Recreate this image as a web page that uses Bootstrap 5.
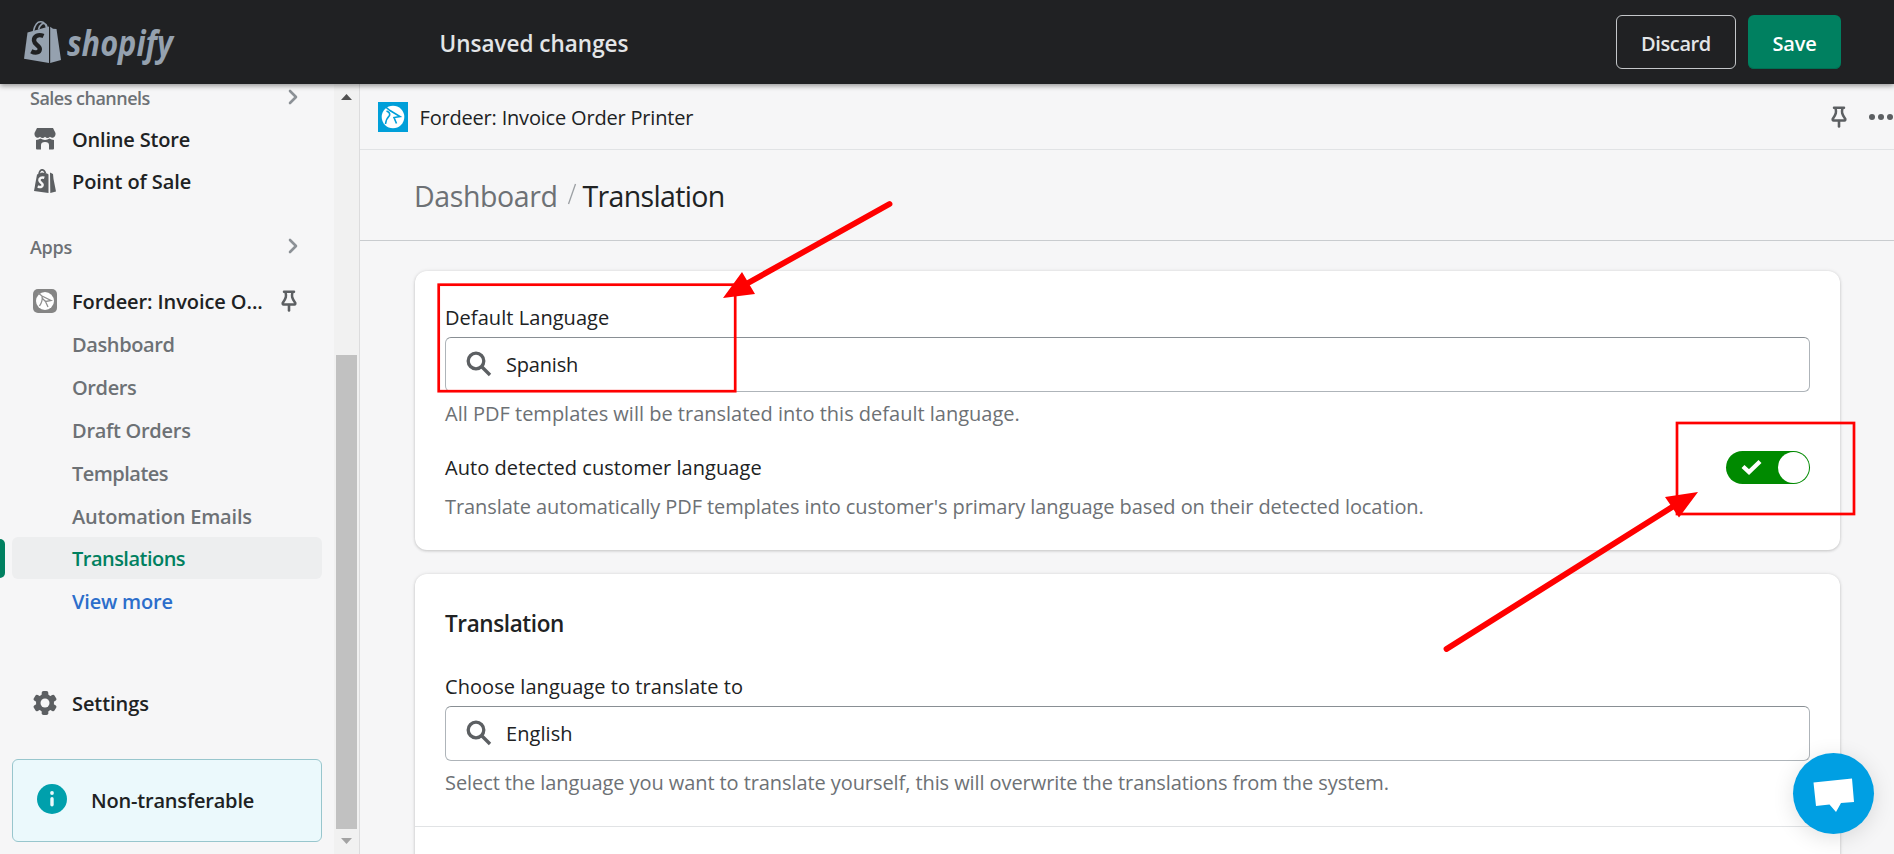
<!DOCTYPE html>
<html lang="en">
<head>
<meta charset="utf-8">
<title>Fordeer: Invoice Order Printer</title>
<link rel="stylesheet" href="https://cdn.jsdelivr.net/npm/bootstrap@5.3.0/dist/css/bootstrap.min.css">
<style>
  html, body { height: 100%; overflow: hidden; }
  body { font-family: "Open Sans", "Noto Sans", sans-serif; font-size: 20px; line-height: 30px; color: #202223; background: #f6f6f7; }
  .t { white-space: nowrap; }
  .drop { padding-top: 2px; }
  .track-6 { letter-spacing: -.66px; }
  .track-5 { letter-spacing: -.52px; }
  .track-4 { letter-spacing: -.39px; }
  .track-3 { letter-spacing: -.28px; }
  .track-2 { letter-spacing: -.19px; }
  .track-1 { letter-spacing: -.08px; }
  .track-wide { letter-spacing: .06px; }

  .topbar { height: 84px; background: #202123; z-index: 3; box-shadow: 0 2px 5px rgba(0,0,0,.38); padding-left: 24px; padding-right: 53px; }
  .brand-slot { width: 415.500px; }
  .brand-slot svg { overflow: visible; }
  .status-text { font-size: 22.5px; font-weight: 600; color: #e3e5e7; padding-top: 4px; }
  .btn-bar { height: 54px; border-radius: 6px; font-size: 20px; font-weight: 600; padding: 3px 0 0; line-height: 30px; }
  .btn-discard { width: 120px; color: #e3e5e7; border: 1px solid #c4c7ca; margin-right: 12px; }
  .btn-save { width: 93px; color: #fff; background: #008060; border: 0; box-shadow: inset 0 -1px 0 #006e52; }

  .sidebar { width: 334px; background: #f6f6f7; }
  .group-head { height: 42px; padding: 0 36px 0 30px; color: #6d7175; font-size: 18px; font-weight: 600; }
  .group-sales { margin-top: -8px; }
  .group-apps { margin-top: 23px; }
  .side-row { height: 42px; padding-left: 33px; font-weight: 600; color: #202223; }
  .side-row svg { flex: none; }
  .side-row svg:first-child { margin-right: 15px; }
  .app-row { margin-top: 13px; padding-right: 37px; }
  .settings-row { margin-top: 60px; }
  .sub-row { height: 43px; padding-left: 72px; font-weight: 600; color: #6d7175; }
  .sub-row.current { height: 42px; margin: 0 12px 1px; padding-left: 60px; border-radius: 6px; background: #edeeef; color: #008060; }
  .sub-row.current::before { content: ""; position: absolute; left: -12px; top: 2px; width: 5px; height: 39px; border-radius: 0 5px 5px 0; background: #008060; }
  .sub-row.more { height: 42px; color: #2c6ecb; }
  .notice { height: 83px; margin: 35px 12px 0; padding-left: 24px; border: 1px solid #98c6cd; border-radius: 6px; background: #ebf9fc; font-weight: 600; }
  .notice svg { margin: -3px 24px 0 0; }

  .scroll-track { width: 25px; background: #f1f1f1; padding-top: 10px; }
  .scroll-thumb { width: 21px; height: 474px; background: #c1c1c1; margin: 255px 0 9px; }

  .content-pane { border-left: 1px solid #dcdcdd; }
  .app-head { height: 66px; border-bottom: 1px solid #e1e3e5; padding-left: 18px; }
  .app-name { margin-left: 11.500px; }
  .app-head .pin { margin-right: 22px; }
  .crumbs { height: 91px; border-bottom: 1px solid #c9cccf; padding-left: 54px; font-size: 28.5px; line-height: 40px; }
  .crumbs svg { margin: -2px 6px 0 9px; }
  .muted-text { color: #6d7175; }

  .panel { width: 1425px; margin-left: 55px; border-radius: 12px; background: #fff; box-shadow: 0 0 4px rgba(23,24,24,.08), 0 1px 3px rgba(0,0,0,.17); padding: 0 30px; }
  .panel-default { margin-top: 30px; height: 279px; padding-top: 32px; }
  .panel-translate { margin-top: 24px; height: 340px; padding-top: 35px; }
  .panel-title { font-size: 22.5px; font-weight: 600; margin-bottom: 33px; }
  .field { height: 54.500px; margin-top: 4px; border: 1px solid #aeb4b9; border-top-color: #898f94; border-radius: 6px; padding-left: 20px; background: #fff; }
  .field svg { margin-right: 14px; }
  .help { margin-top: 7.500px; }
  .auto-row { margin-top: 21px; height: 34px; }
  .auto-help { margin-top: 8px; }
  .rule { margin: 28px -30px 0; border-top: 1px solid #e1e3e5; }
  .toggle { width: 84px; height: 33px; border-radius: 17px; background: #008a00; padding-right: 1px; }
  .toggle svg { margin: -1px 0 0 15px; }
  .knob { width: 31px; height: 31px; border-radius: 50%; background: #fff; }
  .chat { left: 1793px; top: 753px; width: 81px; height: 81px; border-radius: 50%; background: #009fe3; box-shadow: 0 4px 22px rgba(0,0,0,.12); z-index: 4; }
  .marks { z-index: 6; pointer-events: none; }
</style>
</head>
<body class="d-flex flex-column">

<header class="topbar d-flex align-items-center position-relative flex-shrink-0">
  <div class="brand-slot flex-shrink-0">
    <svg width="156" height="48" viewBox="24 18 156 48" fill="#95a1af" class="d-block">
      <path d="M27.500 32.500 49 26.500V63L24 58.700z"/><path d="M50.200 26.800 53 28.700 56.500 29 61 60 50.200 63z"/>
      <path d="M33.500 31C35 24.500 38 21.500 41 21.800S46 25 46.500 28M38.500 29.500C40 24 43.500 22 46 24.500L47.200 27" fill="none" stroke="#95a1af" stroke-width="1.500"/>
      <path d="M43.500 36C38.500 33.800 33.800 36 34 40.500 34.300 45 40.200 45.500 39.800 49.300 39.400 53 35 53.300 31.300 51.300" fill="none" stroke="#202123" stroke-width="4.400"/>
      <text x="67" y="55.500" font-family="Open Sans" font-size="36" font-weight="700" font-style="italic" textLength="106" lengthAdjust="spacingAndGlyphs">shopify</text>
    </svg>
  </div>
  <div class="status-text t me-auto">Unsaved changes</div>
  <button class="btn btn-bar btn-discard track-4">Discard</button>
  <button class="btn btn-bar btn-save track-2">Save</button>
</header>

<div class="d-flex flex-grow-1 overflow-hidden">
  <nav class="sidebar flex-shrink-0">
    <div class="group-head group-sales d-flex align-items-center justify-content-between"><span class="t drop track-5">Sales channels</span>
      <svg width="10" height="16" viewBox="0 0 10 16" fill="none" stroke="#8c9196" stroke-width="2.600" stroke-linecap="round" stroke-linejoin="round"><path d="M2 2 8 8 2 14"/></svg></div>
    <div class="side-row d-flex align-items-center t">
      <svg width="24" height="24" viewBox="0 0 24 24" fill="#5c5f62"><path d="M4 1h16l2.500 5v1.500a3.200 3.200 0 0 1-5.500 2.200 3.500 3.500 0 0 1-5 0 3.500 3.500 0 0 1-5 0A3.200 3.200 0 0 1 1.500 7.500V6z"/><path d="M3 13q2.500 0 4.500-1.400 2 1.400 4.500 1.400t4.500-1.400Q18.500 13 21 13v8.500q0 1-1 1h-4V18q0-3-4-3t-4 3v4.500H4q-1 0-1-1z"/></svg>
      <span class="drop track-2">Online Store</span></div>
    <div class="side-row d-flex align-items-center t">
      <svg width="24" height="24" viewBox="0 0 24 24" fill="#5c5f62"><path d="M4 5.500 9 3.500 14 4.500 15.500 5.500V24L1 22z"/><path d="M17 3.500 20 5 20.500 10 23 22.500 17.300 24z"/><path d="M6 5C7-.5 11-.5 12.500 4.500" fill="none" stroke="#5c5f62" stroke-width="1.700"/><path d="M11.300 8.800C8.500 7.800 6.300 9 6.400 11.300S9.900 13.800 9.700 16 7 18.600 4.800 17.300" fill="none" stroke="#f6f6f7" stroke-width="2.500"/></svg>
      <span class="drop track-1">Point of Sale</span></div>
    <div class="group-head group-apps d-flex align-items-center justify-content-between"><span class="t drop track-3">Apps</span>
      <svg width="10" height="16" viewBox="0 0 10 16" fill="none" stroke="#8c9196" stroke-width="2.600" stroke-linecap="round" stroke-linejoin="round"><path d="M2 2 8 8 2 14"/></svg></div>
    <div class="side-row app-row d-flex align-items-center t">
      <svg width="24" height="24" viewBox="0 0 24 24"><rect width="24" height="24" rx="5" fill="#858585"/><circle cx="12" cy="12" r="9" fill="#fff"/><path d="M4.500 3.500 9 7 18 11.500 12.500 12.500 15 18M9 7Q10 12 6.500 17M9 9 12.500 12.500" fill="none" stroke="#8f8f8f" stroke-width="1.300"/></svg>
      <span class="me-auto drop track-1">Fordeer: Invoice O...</span>
      <svg width="16" height="22" viewBox="0 0 16 22" fill="none" stroke="#5c5f62"><path d="M3 1.700H13M4.500 2C5.500 6 5.300 8 1.700 13Q1.500 14.500 2.500 14.500H13.500Q14.500 14.500 14.300 13C10.700 8 10.500 6 11.500 2" stroke-width="2.500" stroke-linecap="round"/><path d="M8 15V20.500" stroke-width="2.600" stroke-linecap="round"/></svg></div>
    <div class="sub-row d-flex align-items-center t"><span class="drop track-4">Dashboard</span></div>
    <div class="sub-row d-flex align-items-center t"><span class="drop track-4">Orders</span></div>
    <div class="sub-row d-flex align-items-center t"><span class="drop track-3">Draft Orders</span></div>
    <div class="sub-row d-flex align-items-center t"><span class="drop track-5">Templates</span></div>
    <div class="sub-row d-flex align-items-center t"><span class="drop track-2">Automation Emails</span></div>
    <div class="sub-row current position-relative d-flex align-items-center t"><span class="drop track-5">Translations</span></div>
    <div class="sub-row more d-flex align-items-center t"><span class="drop track-2">View more</span></div>
    <div class="side-row settings-row d-flex align-items-center t">
      <svg width="24" height="24" viewBox="-12 -12 24 24"><g fill="#5c5f62"><circle r="9"/><rect x="-3.300" y="-12" width="6.600" height="24" rx="1.800"/><rect x="-3.300" y="-12" width="6.600" height="24" rx="1.800" transform="rotate(60)"/><rect x="-3.300" y="-12" width="6.600" height="24" rx="1.800" transform="rotate(120)"/></g><circle r="4.500" fill="#f6f6f7"/></svg>
      <span class="drop track-1">Settings</span></div>
    <div class="notice d-flex align-items-center t">
      <svg width="30" height="30" viewBox="0 0 30 30"><circle cx="15" cy="15" r="15" fill="#00a0ac"/><g fill="#ebf9fc"><circle cx="15" cy="9" r="1.900"/><rect x="13.300" y="13" width="3.400" height="9.500" rx="1.700"/></g></svg>
      <span class="track-2">Non-transferable</span></div>
  </nav>
  <div class="scroll-track flex-shrink-0 d-flex flex-column align-items-center">
    <svg width="11" height="6" viewBox="0 0 11 6"><path d="M5.500 0 11 6H0z" fill="#505050"/></svg>
    <div class="scroll-thumb"></div>
    <svg width="11" height="6" viewBox="0 0 11 6"><path d="M0 0H11L5.500 6z" fill="#a3a3a3"/></svg>
  </div>

  <main class="content-pane flex-grow-1 overflow-hidden">
    <div class="app-head d-flex align-items-center">
      <svg width="30" height="30" viewBox="0 0 30 30"><rect width="30" height="30" fill="#009fd9"/><circle cx="15" cy="15" r="11.300" fill="#fff"/><path d="M6.500 4 12 8.500 22 14.500 16 15.500 18.500 21.500M8.500 9Q12.500 10.500 11.500 13.500 8 17 7.500 22" fill="none" stroke="#009fd9" stroke-width="1.600"/></svg>
      <span class="t me-auto app-name drop track-2">Fordeer: Invoice Order Printer</span>
      <svg class="pin" width="16" height="22" viewBox="0 0 16 22" fill="none" stroke="#5c5f62"><path d="M3 1.700H13M4.500 2C5.500 6 5.300 8 1.700 13Q1.500 14.500 2.500 14.500H13.500Q14.500 14.500 14.300 13C10.700 8 10.500 6 11.500 2" stroke-width="2.500" stroke-linecap="round"/><path d="M8 15V20.500" stroke-width="2.600" stroke-linecap="round"/></svg>
      <svg width="25" height="6" viewBox="0 0 25 6" fill="#5c5f62"><circle cx="3" cy="3" r="3"/><circle cx="12" cy="3" r="3"/><circle cx="21" cy="3" r="3"/></svg>
    </div>
    <div class="crumbs d-flex align-items-center">
      <span class="muted-text t drop track-4">Dashboard</span>
      <svg width="10" height="22" viewBox="0 0 10 22"><path d="M8.500 1 1.500 21" stroke="#9b9fa3" stroke-width="1.300"/></svg>
      <span class="t drop track-6">Translation</span>
    </div>

    <section class="panel panel-default">
      <div class="t track-wide">Default Language</div>
      <div class="field d-flex align-items-center">
        <svg width="26" height="26" viewBox="0 0 26 26" fill="none" stroke="#5c5f62" stroke-width="3.300"><circle cx="10" cy="10" r="7.800"/><path d="M15.500 15.500 24 24"/></svg>
        <span class="drop track-2">Spanish</span></div>
      <div class="muted-text t help">All PDF templates will be translated into this default language.</div>
      <div class="auto-row d-flex align-items-center justify-content-between">
        <span class="t drop track-wide">Auto detected customer language</span>
        <div class="toggle d-flex align-items-center justify-content-between">
          <svg width="21" height="16" viewBox="0 0 21 16"><path d="M2 7.500 8 13 19 2.500" fill="none" stroke="#fff" stroke-width="4.300"/></svg>
          <div class="knob"></div>
        </div>
      </div>
      <div class="muted-text t auto-help track-1">Translate automatically PDF templates into customer's primary language based on their detected location.</div>
    </section>

    <section class="panel panel-translate">
      <div class="t panel-title track-4">Translation</div>
      <div class="t track-wide">Choose language to translate to</div>
      <div class="field d-flex align-items-center">
        <svg width="26" height="26" viewBox="0 0 26 26" fill="none" stroke="#5c5f62" stroke-width="3.300"><circle cx="10" cy="10" r="7.800"/><path d="M15.500 15.500 24 24"/></svg>
        <span class="drop track-wide">English</span></div>
      <div class="muted-text t help track-1">Select the language you want to translate yourself, this will overwrite the translations from the system.</div>
      <div class="rule"></div>
    </section>
  </main>
</div>

<div class="chat position-absolute"><svg class="d-block" width="81" height="81" viewBox="1793 753 81 81"><path d="M1813.500 782.500 1852 778.500 1854 802 1841 803 1836 812 1829.500 804.500 1816 806z" fill="#fff"/></svg></div>
<svg class="marks position-absolute top-0 start-0" width="1894" height="854" viewBox="0 0 1894 854" fill="none" stroke="#f00">
  <rect x="438.700" y="284.700" width="296.500" height="106.500" stroke-width="2.700"/>
  <rect x="1677" y="423" width="177" height="91" stroke-width="2.700"/>
  <path d="M889.500 204 748 283M1446.500 649 1673 506.500" stroke-width="5.800" stroke-linecap="round"/>
  <path d="M723 298 742 272 755 294zM1698 492 1665 497 1679 517.500z" fill="#f00" stroke="none"/>
</svg>
<script src="https://cdn.jsdelivr.net/npm/bootstrap@5.3.0/dist/js/bootstrap.bundle.min.js"></script>
</body>
</html>
